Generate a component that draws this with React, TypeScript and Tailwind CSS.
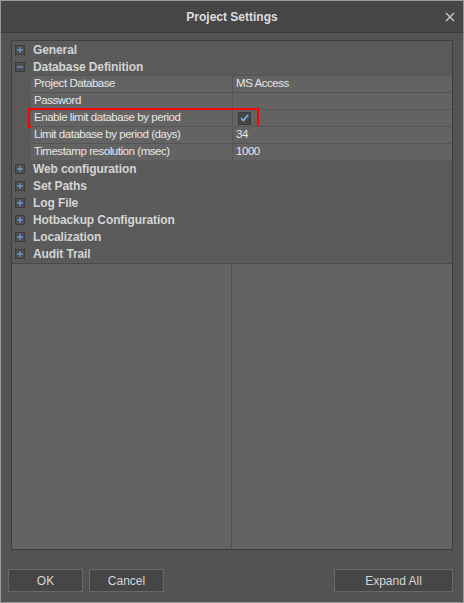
import React from "react";

const font = { fontFamily: '"Liberation Sans", Arial, sans-serif' };

function Expander({ open }: { open?: boolean }) {
  return (
    <div className="w-[10px] h-[10px] border border-[#3c3c3c] bg-[#4e4e4e] flex items-center justify-center shrink-0">
      <svg width="6" height="6" viewBox="0 0 6 6">
        <rect x="0" y="2.5" width="6" height="1" fill="#6cb0f5" />
        {!open && <rect x="2.5" y="0" width="1" height="6" fill="#6cb0f5" />}
      </svg>
    </div>
  );
}

function Group({ label, open }: { label: string; open?: boolean }) {
  return (
    <div className="h-[17px] flex items-center gap-[8px] pl-[3px]">
      <Expander open={open} />
      <span className="text-[12px] font-bold text-[#d4d4d4] tracking-[-0.1px]">{label}</span>
    </div>
  );
}

function Prop({
  label,
  value,
  check,
  highlight,
}: {
  label: string;
  value?: string;
  check?: boolean;
  highlight?: boolean;
}) {
  return (
    <div className="h-[17px] flex pl-[19px] relative">
      <div className="w-[202px] border-t border-r border-[#555555] bg-[#636363] flex items-center pl-[3px] text-[11.5px] tracking-[-0.45px] text-[#e6e6e6]">
        {label}
      </div>
      <div className="flex-1 border-t border-[#555555] bg-[#636363] flex items-center pl-[3px] text-[11.5px] tracking-[-0.45px] text-[#e6e6e6]">
        {check ? (
          <div className="w-[13px] h-[13px] ml-[2px] bg-[#464646] border border-[#3a3a3a] flex items-center justify-center">
            <svg width="9" height="8" viewBox="0 0 9 8">
              <path d="M1 4.2 L3.4 6.5 L8 1" stroke="#6fb4f8" strokeWidth="1.6" fill="none" />
            </svg>
          </div>
        ) : (
          value
        )}
      </div>
      {highlight && (
        <div className="absolute left-[16px] top-[-1px] w-[231px] h-[20px] border-2 border-[#ff0000]" />
      )}
    </div>
  );
}

function Button({ children, className }: { children: React.ReactNode; className?: string }) {
  return (
    <div
      className={
        "h-[23px] border border-[#686868] bg-[#464646] flex items-center justify-center text-[12px] text-[#d6d6d6] " +
        (className ?? "")
      }
    >
      {children}
    </div>
  );
}

export default function App() {
  return (
    <div style={font} className="w-[464px] h-[603px] bg-[#9a9a9a] p-px">
      <div className="w-full h-full bg-[#535353] flex flex-col">
        <div className="h-[32px] bg-[#464646] border-b border-[#3b3b3b] flex items-center justify-center relative shrink-0">
          <span className="text-[12px] font-bold text-[#dedede]">Project Settings</span>
          <svg className="absolute right-[8px] top-[11px]" width="10" height="10" viewBox="0 0 10 10">
            <path d="M1 1 L9 9 M9 1 L1 9" stroke="#cfcfcf" strokeWidth="1.2" />
          </svg>
        </div>
        <div className="flex-1 flex flex-col px-[10px] pt-[7px] pb-[10px]">
          <div className="flex-1 flex flex-col border border-[#3e3e3e] bg-[#5a5a5a]">
            <Group label="General" />
            <Group label="Database Definition" open />
            <Prop label="Project Database" value="MS Access" />
            <Prop label="Password" value="" />
            <Prop label="Enable limit database by period" check highlight />
            <Prop label="Limit database by period (days)" value="34" />
            <Prop label="Timestamp resolution (msec)" value="1000" />
            <Group label="Web configuration" />
            <Group label="Set Paths" />
            <Group label="Log File" />
            <Group label="Hotbackup Configuration" />
            <Group label="Localization" />
            <Group label="Audit Trail" />
            <div className="flex-1 flex border-t border-[#4a4a4a] bg-[#636363] mt-[1px]">
              <div className="w-[220px] border-r border-[#525252]" />
              <div className="flex-1" />
            </div>
          </div>
          <div className="h-[19px] shrink-0" />
          <div className="flex items-center shrink-0 ml-[-3px]">
            <Button className="w-[75px]">OK</Button>
            <Button className="w-[75px] ml-[6px]">Cancel</Button>
            <div className="flex-1" />
            <Button className="w-[119px]">Expand All</Button>
          </div>
        </div>
      </div>
    </div>
  );
}
